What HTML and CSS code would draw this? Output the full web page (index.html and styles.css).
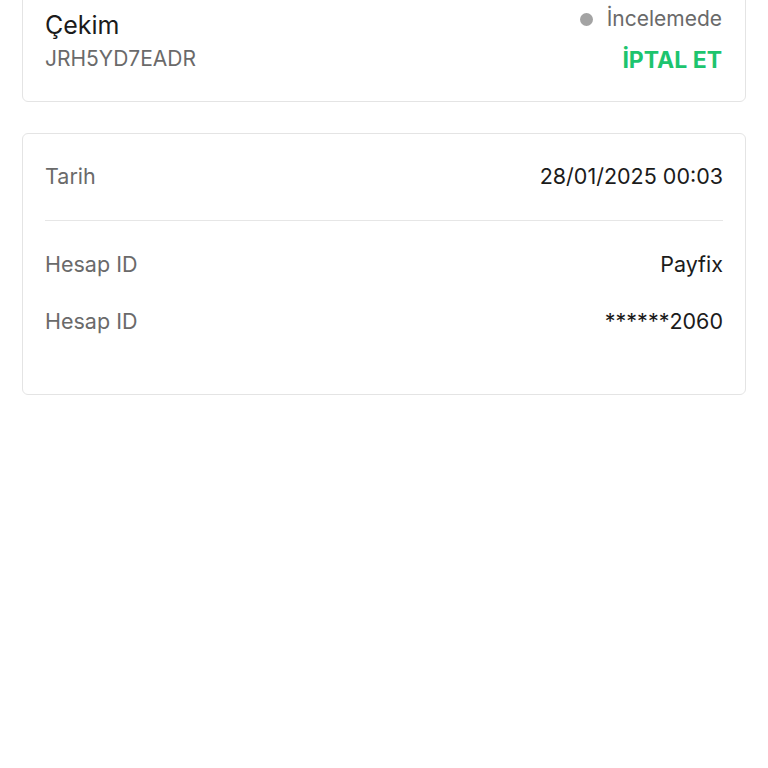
FILE: index.html
```html
<!DOCTYPE html>
<html>
<head>
  <meta name="viewport" content="width=device-width, initial-scale=1.0">
  <link rel="stylesheet" href="styles.css">
</head>
<body>
  <div class="page">
    <div class="card head">
      <div class="head-left">
        <div class="title">Çekim</div>
        <div class="code">JRH5YD7EADR</div>
      </div>
      <div class="head-right">
        <div class="status"><span class="dot"></span>İncelemede</div>
        <div class="cancel">İPTAL ET</div>
      </div>
    </div>

    <div class="card details">
      <div class="row">
        <span class="label">Tarih</span>
        <span class="value">28/01/2025 00:03</span>
      </div>
      <div class="divider"></div>
      <div class="row">
        <span class="label">Hesap ID</span>
        <span class="value">Payfix</span>
      </div>
      <div class="row">
        <span class="label">Hesap ID</span>
        <span class="value">******2060</span>
      </div>
    </div>
  </div>
</body>
</html>
```

FILE: styles.css
```css
html, body {
  margin: 0;
  padding: 0;
  background-color: #fff;
  font-family: Inter, "Noto Sans", sans-serif;
}

.page {
  padding: 0 22px;
}

.card {
  border: 1px solid #e4e4e4;
  border-radius: 6px;
  background-color: #fff;
}

.head {
  margin-top: -20px;
  padding: 27px 23px 25px 22px;
  display: flex;
  justify-content: space-between;
}

.title {
  font-size: 25px;
  line-height: 34px;
  color: #1b1b1b;
}

.code {
  font-size: 21px;
  line-height: 34px;
  color: #6a6a6a;
}

.head-right {
  display: flex;
  flex-direction: column;
  align-items: flex-end;
}

.status {
  display: flex;
  align-items: center;
  font-size: 21px;
  line-height: 22px;
  color: #6a6a6a;
}

.dot {
  width: 13px;
  height: 13px;
  border-radius: 50%;
  background-color: #a3a3a3;
  margin-right: 14px;
}

.cancel {
  margin-top: 15px;
  font-size: 23px;
  line-height: 30px;
  font-weight: bold;
  color: #1dc46e;
}

.details {
  margin-top: 31px;
  padding: 28px 22px 59px;
}

.row {
  display: flex;
  justify-content: space-between;
  font-size: 21.5px;
  line-height: 28px;
}

.row + .row {
  margin-top: 29px;
}

.label {
  color: #6a6a6a;
}

.value {
  color: #1b1b1b;
}

.divider {
  height: 1px;
  background-color: #e6e6e6;
  margin: 30px 0 29px;
}
```
